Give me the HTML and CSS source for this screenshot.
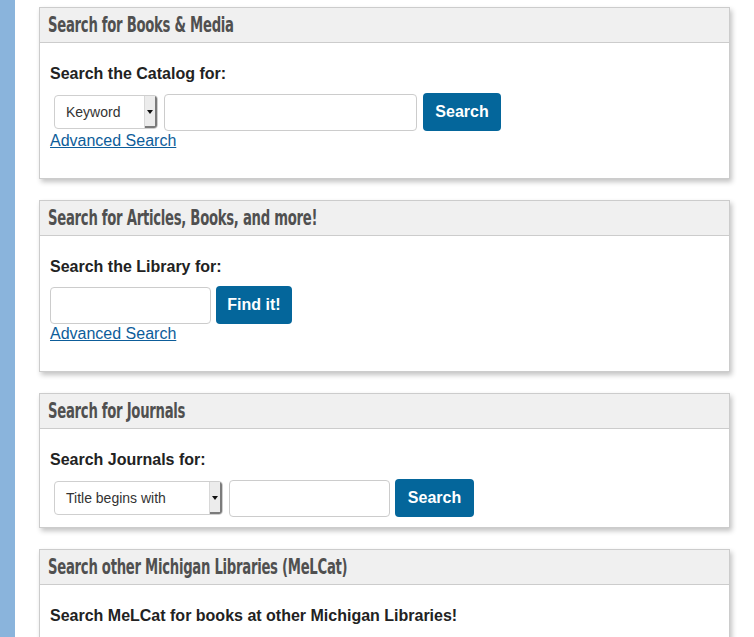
FILE: index.html
```html
<!DOCTYPE html>
<html lang="en">
<head>
<meta charset="utf-8">
<title>Library Search</title>
<link rel="stylesheet" href="styles.css">
</head>
<body>
<div class="page">
  <div class="sidebar"></div>
  <main class="content">
    <section class="panel">
      <h2 class="panel-head"><span class="head-text">Search for Books &amp; Media</span></h2>
      <div class="panel-body">
        <p class="label">Search the Catalog for:</p>
        <form class="row">
          <div class="select select-catalog"><span class="select-text">Keyword</span><span class="select-arrow"></span></div>
          <input class="field field-catalog" type="text">
          <button class="btn btn-catalog" type="button">Search</button>
        </form>
        <a class="adv" href="#">Advanced Search</a>
      </div>
    </section>

    <section class="panel">
      <h2 class="panel-head"><span class="head-text">Search for Articles, Books, and more!</span></h2>
      <div class="panel-body">
        <p class="label">Search the Library for:</p>
        <form class="row">
          <input class="field field-library" type="text">
          <button class="btn btn-library" type="button">Find it!</button>
        </form>
        <a class="adv" href="#">Advanced Search</a>
      </div>
    </section>

    <section class="panel">
      <h2 class="panel-head"><span class="head-text">Search for Journals</span></h2>
      <div class="panel-body">
        <p class="label">Search Journals for:</p>
        <form class="row">
          <div class="select select-journal"><span class="select-text">Title begins with</span><span class="select-arrow"></span></div>
          <input class="field field-journal" type="text">
          <button class="btn btn-journal" type="button">Search</button>
        </form>
      </div>
    </section>

    <section class="panel">
      <h2 class="panel-head"><span class="head-text">Search other Michigan Libraries (MeLCat)</span></h2>
      <div class="panel-body">
        <p class="label">Search MeLCat for books at other Michigan Libraries!</p>
      </div>
    </section>
  </main>
</div>
</body>
</html>
```

FILE: styles.css
```css
html, body {
  margin: 0;
  padding: 0;
  background: #ffffff;
}
body {
  font-family: "Liberation Sans", Arial, Helvetica, sans-serif;
  color: #222;
  overflow: hidden;
  height: 637px;
}
.page {
  display: flex;
  min-height: 637px;
}
.sidebar {
  width: 15px;
  flex: 0 0 15px;
  background: #8ab4dc;
}
.content {
  padding: 7px 0 0 24px;
  display: flex;
  flex-direction: column;
  gap: 21px;
}
.panel {
  width: 691px;
  box-sizing: border-box;
  border: 1px solid #cccccc;
  background: #ffffff;
  box-shadow: 2px 3px 5px rgba(0, 0, 0, 0.24);
}
.panel-head {
  margin: 0;
  height: 35px;
  box-sizing: border-box;
  background: #f0f0f0;
  border-bottom: 1px solid #cccccc;
  padding: 0 8px;
  font-family: "DejaVu Sans Condensed", "DejaVu Sans", sans-serif;
  font-weight: bold;
  font-size: 21px;
  line-height: 34px;
  color: #505050;
  letter-spacing: -0.4px;
  white-space: nowrap;
}
.head-text {
  display: inline-block;
  transform: scaleX(0.7);
  transform-origin: 0 50%;
}
.panel-body {
  padding: 10px;
}
.label {
  margin: 11px 0 9px 0;
  font-size: 16px;
  line-height: 20px;
  font-weight: bold;
  color: #222;
}
.row {
  display: flex;
  align-items: center;
  margin: 0;
  height: 38px;
}
.select {
  display: flex;
  align-items: stretch;
  box-sizing: border-box;
  height: 34px;
  margin-left: 4px;
  border: 1px solid #cfcfcf;
  border-radius: 4px;
  background: #fff;
  overflow: hidden;
}
.select-catalog { width: 104px; }
.select-journal { width: 169px; }
.select-text {
  flex: 1;
  padding-left: 11px;
  font-size: 14px;
  line-height: 32px;
  color: #333;
  white-space: nowrap;
}
.select-arrow {
  width: 12px;
  background: #ececec;
  border-left: 1px solid #d8d8d8;
  box-shadow: inset -2px -2px 0 #7b7b7b;
  display: flex;
  align-items: center;
  justify-content: center;
}
.select-arrow::before {
  content: "";
  width: 0;
  height: 0;
  border-left: 3px solid transparent;
  border-right: 3px solid transparent;
  border-top: 4px solid #111;
  margin-right: 2px;
}
.field {
  box-sizing: border-box;
  height: 37px;
  margin: 0 0 0 6px;
  border: 1px solid #cccccc;
  border-radius: 4px;
  background: #fff;
  padding: 0 6px;
  font-size: 15px;
}
.field-catalog { width: 253px; }
.field-library { width: 161px; margin-left: 0; }
.field-journal { width: 161px; }
.btn {
  box-sizing: border-box;
  height: 38px;
  margin-left: 6px;
  border: none;
  border-radius: 4px;
  background: #04669b;
  color: #ffffff;
  font-family: "Liberation Sans", Arial, Helvetica, sans-serif;
  font-weight: bold;
  font-size: 16px;
  padding: 0;
  cursor: pointer;
}
.btn-catalog { width: 78px; }
.btn-library { width: 76px; margin-left: 5px; }
.btn-journal { width: 79px; margin-left: 5px; }
.adv {
  display: inline-block;
  margin-bottom: 17px;
  font-size: 16px;
  line-height: 20px;
  color: #0d5d9a;
  text-decoration: underline;
}
```
